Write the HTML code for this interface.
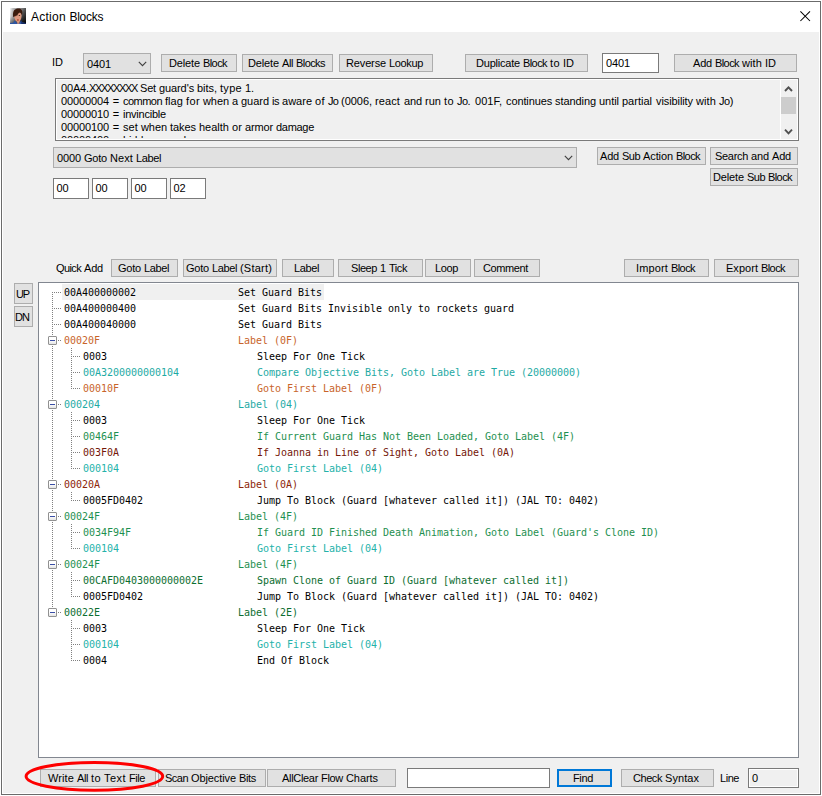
<!DOCTYPE html>
<html lang="en"><head><meta charset="utf-8"><title>Action Blocks</title>
<style>
html,body{margin:0;padding:0;background:#fff;}
body{width:822px;height:796px;overflow:hidden;position:relative;font-family:'Liberation Sans',sans-serif;font-size:11px;color:#000;}
.abs{position:absolute;}
#win{position:absolute;left:1px;top:1px;width:818px;height:792px;border:1px solid #6b6b6b;background:#fff;}
#client{position:absolute;left:3px;top:32px;width:816px;height:761px;background:#f0f0f0;}
#ttext{position:absolute;left:31px;top:10px;font-size:12px;line-height:14px;white-space:pre;}
.w{position:absolute;white-space:pre;line-height:13px;height:13px;}
.btn{position:absolute;box-sizing:border-box;border:1px solid #adadad;background:#e1e1e1;}
.edit{position:absolute;box-sizing:border-box;border:1px solid #7a7a7a;background:#fff;}
.combo{position:absolute;box-sizing:border-box;border:1px solid #adadad;background:#e1e1e1;}
.lbl{position:absolute;}
#memo{position:absolute;left:55px;top:78px;width:744px;height:63px;box-sizing:border-box;border:1px solid #7a7a7a;background:#f0f0f0;overflow:hidden;}
#memo .in{position:absolute;left:0;top:0;right:0;bottom:0;border:1px solid #fff;}
#tree{position:absolute;left:38px;top:282px;width:761px;height:476px;box-sizing:border-box;border:1px solid #828790;background:#fff;overflow:hidden;}
.tr{position:absolute;font-family:'DejaVu Sans Mono','Liberation Mono',monospace;font-size:10px;letter-spacing:-0.02px;line-height:16px;height:16px;white-space:pre;}
.hd{position:absolute;height:1px;background-image:linear-gradient(to right,#808080 50%,transparent 50%);background-size:2px 1px;}
.vd{position:absolute;width:1px;background-image:linear-gradient(to bottom,#808080 50%,transparent 50%);background-size:1px 2px;}
.box{position:absolute;width:9px;height:9px;box-sizing:border-box;border:1px solid #919191;background:linear-gradient(to bottom,#fff 45%,#e4e4e4 100%);border-radius:1px;}
.box i{position:absolute;left:1px;top:3px;width:5px;height:1px;background:#3a4ea6;}
</style></head>
<body>
<div id="win"></div>
<div id="client"></div>
<svg class="abs" style="left:10px;top:8px" width="16" height="16" viewBox="0 0 16 16">
<defs>
<linearGradient id="ig" x1="0" y1="0" x2="1" y2="0.15"><stop offset="0" stop-color="#f8f8f8"/><stop offset="0.2" stop-color="#b8b8b8"/><stop offset="0.7" stop-color="#808080"/><stop offset="1" stop-color="#5a5a5a"/></linearGradient>
<linearGradient id="ih" x1="0.2" y1="0" x2="0.9" y2="1"><stop offset="0.3" stop-color="#000" stop-opacity="0"/><stop offset="1" stop-color="#000" stop-opacity="0.95"/></linearGradient>
<filter id="bl" x="-10%" y="-10%" width="120%" height="120%"><feGaussianBlur stdDeviation="0.3"/></filter>
<clipPath id="ic"><rect width="16" height="16"/></clipPath>
</defs>
<g clip-path="url(#ic)">
<rect width="16" height="16" fill="url(#ig)"/>
<rect width="16" height="16" fill="url(#ih)"/>
<g filter="url(#bl)">
<path d="M-1 17 V15 L3.2 14.7 L4.5 12.5 L7 14.8 L9.6 14.8 L11 12.6 L12.6 14.6 L17 15.2 V17 Z" fill="#2e55a2"/>
<path d="M11 12.6 L12.6 14.6 L17 15.2 V17 H11.5 Z" fill="#162c62"/>
<path d="M7 11.5 L7.2 15.8 L9.4 15.8 L9.7 11.5 Z" fill="#d08e76"/>
<path d="M4 6 C3.8 9 4.8 12 6.6 13.6 C7.6 14.6 8.8 14.6 9.6 13.4 C11 11.6 11.8 9 11.6 6 C10 4 6 4 4 6 Z" fill="#dc987e"/>
<path d="M3.3 9.2 C2.4 5.2 3.4 1.8 6 0.9 C8 0.1 10.6 0.4 11.6 2 C12.6 3.6 12.5 5.6 11.8 7.2 C11.5 5.6 10.6 4.8 9.6 4.5 C8.6 5 7.7 6.2 7.1 7.7 C6.4 7.3 5.6 7.6 5 8.3 C4.3 8.8 3.7 9.1 3.3 9.2 Z" fill="#3a1a0e"/>
<ellipse cx="5.7" cy="7.8" rx="0.9" ry="0.45" fill="#40241a"/>
<ellipse cx="9.4" cy="7.6" rx="0.8" ry="0.5" fill="#40241a"/>
<ellipse cx="7.9" cy="12" rx="1.05" ry="0.7" fill="#b23e2a"/>
</g></g>
</svg>
<div id="ttext"><span style="letter-spacing:0.25px">Action</span> <span style="letter-spacing:-0.28px;margin-left:0.3px">Blocks</span></div>
<svg class="abs" style="left:800px;top:11px" width="11" height="11" viewBox="0 0 11 11"><path d="M0.4 0.4 L10 10 M10 0.4 L0.4 10" stroke="#000" stroke-width="1.05" fill="none"/></svg>
<span class="w" style="left:52px;top:56px">ID</span><div class="combo" style="left:83px;top:53px;width:68px;height:21px"><span class="w" style="left:3px;top:4px;letter-spacing:-0.12px">0401</span></div>
<svg class="abs" style="left:137.5px;top:61px" width="9" height="6" viewBox="0 0 9 6"><path d="M0.8 0.8 L4.5 4.7 L8.2 0.8" stroke="#404040" stroke-width="1.1" fill="none"/></svg>
<div class="edit" style="left:602px;top:53px;width:57px;height:20px"><span class="w" style="left:3px;top:3px;letter-spacing:-0.12px">0401</span></div>
<div id="memo">
<span class="w" style="left:5px;top:3px;letter-spacing:-0.15px">00A4.</span><span class="w" style="left:33px;top:3px;letter-spacing:-1.34px">XXXXXXXX</span> <span class="w" style="left:84px;top:3px;letter-spacing:-0.17px">Set</span> <span class="w" style="left:103px;top:3px;letter-spacing:-0.10px">guard's</span> <span class="w" style="left:141px;top:3px;letter-spacing:-0.04px">bits,</span> <span class="w" style="left:164px;top:3px;letter-spacing:0.30px">type</span> <span class="w" style="left:189px;top:3px;letter-spacing:-0.09px">1.</span>
<span class="w" style="left:5px;top:16px;letter-spacing:-0.12px">00000004</span> <span class="w" style="left:56.78px;top:16px">=</span> <span class="w" style="left:67px;top:16px;letter-spacing:-0.53px">common</span> <span class="w" style="left:109px;top:16px;letter-spacing:0.06px">flag</span> <span class="w" style="left:130px;top:16px;letter-spacing:0.39px">for</span> <span class="w" style="left:147px;top:16px;letter-spacing:-0.07px">when</span> <span class="w" style="left:175.94px;top:16px">a</span> <span class="w" style="left:185px;top:16px;letter-spacing:-0.03px">guard</span> <span class="w" style="left:216px;top:16px;letter-spacing:-0.48px">is</span> <span class="w" style="left:226px;top:16px;letter-spacing:0.01px">aware</span> <span class="w" style="left:259px;top:16px;letter-spacing:0.41px">of</span> <span class="w" style="left:272px;top:16px;letter-spacing:-0.81px">Jo</span> <span class="w" style="left:285px;top:16px;letter-spacing:-0.03px">(0006,</span> <span class="w" style="left:319px;top:16px;letter-spacing:0.11px">react</span> <span class="w" style="left:348px;top:16px;letter-spacing:-0.12px">and</span> <span class="w" style="left:369px;top:16px;letter-spacing:0.03px">run</span> <span class="w" style="left:388px;top:16px;letter-spacing:0.41px">to</span> <span class="w" style="left:401px;top:16px;letter-spacing:-0.56px">Jo.</span> <span class="w" style="left:419px;top:16px;letter-spacing:0.02px">001F,</span> <span class="w" style="left:450px;top:16px;letter-spacing:-0.12px">continues</span> <span class="w" style="left:499px;top:16px;letter-spacing:-0.07px">standing</span> <span class="w" style="left:543px;top:16px;letter-spacing:-0.04px">until</span> <span class="w" style="left:566px;top:16px">partial</span> <span class="w" style="left:600px;top:16px;letter-spacing:-0.09px">visibility</span> <span class="w" style="left:640px;top:16px;letter-spacing:0.11px">with</span> <span class="w" style="left:663px;top:16px;letter-spacing:-0.43px">Jo)</span>
<span class="w" style="left:5px;top:29px;letter-spacing:-0.12px">00000010</span> <span class="w" style="left:56.78px;top:29px">=</span> <span class="w" style="left:67px;top:29px;letter-spacing:-0.23px">invincible</span>
<span class="w" style="left:5px;top:42px;letter-spacing:-0.12px">00000100</span> <span class="w" style="left:56.78px;top:42px">=</span> <span class="w" style="left:67px;top:42px;letter-spacing:0.10px">set</span> <span class="w" style="left:85px;top:42px;letter-spacing:-0.07px">when</span> <span class="w" style="left:114px;top:42px;letter-spacing:-0.06px">takes</span> <span class="w" style="left:143px;top:42px">health</span> <span class="w" style="left:176px;top:42px;letter-spacing:0.11px">or</span> <span class="w" style="left:189px;top:42px;letter-spacing:-0.15px">armor</span> <span class="w" style="left:220px;top:42px;letter-spacing:-0.29px">damage</span>
<span class="w" style="left:5px;top:55px;letter-spacing:-0.12px">00000400</span> <span class="w" style="left:56.78px;top:55px">=</span> <span class="w" style="left:67px;top:55px;letter-spacing:-0.17px">hidden</span> <span class="w" style="left:102px;top:55px;letter-spacing:-0.03px">guard</span>
<div class="abs" style="left:1px;top:59px;width:723px;height:1px;background:#f0f0f0"></div><div class="abs" style="left:724px;top:1px;width:1px;height:60px;background:#fff"></div><div class="abs" style="left:725px;top:1px;width:16px;height:60px;background:#f0f0f0"></div>
<div class="abs" style="left:725px;top:18px;width:15px;height:17px;background:#cdcdcd"></div>
<svg class="abs" style="left:728px;top:6px" width="9" height="8" viewBox="0 0 9 8"><path d="M1 6 L4.5 2.3 L8 6" stroke="#505050" stroke-width="1.9" fill="none"/></svg>
<svg class="abs" style="left:728px;top:48.5px" width="9" height="8" viewBox="0 0 9 8"><path d="M1 1.6 L4.5 5.3 L8 1.6" stroke="#505050" stroke-width="1.9" fill="none"/></svg>
<div class="in"></div></div>
<div class="combo" style="left:53px;top:147px;width:524px;height:21px"><span class="w" style="left:3px;top:4px;letter-spacing:-0.12px">0000</span> <span class="w" style="left:30px;top:4px;letter-spacing:-0.21px">Goto</span> <span class="w" style="left:56px;top:4px;letter-spacing:0.09px">Next</span> <span class="w" style="left:82px;top:4px;letter-spacing:-0.38px">Label</span></div>
<svg class="abs" style="left:563.5px;top:155px" width="9" height="6" viewBox="0 0 9 6"><path d="M0.8 0.8 L4.5 4.7 L8.2 0.8" stroke="#404040" stroke-width="1.1" fill="none"/></svg>
<div class="edit" style="left:53px;top:178px;width:36px;height:21px"><span class="w" style="left:2.5px;top:3px;letter-spacing:-0.12px">00</span></div>
<div class="edit" style="left:92px;top:178px;width:36px;height:21px"><span class="w" style="left:2.5px;top:3px;letter-spacing:-0.12px">00</span></div>
<div class="edit" style="left:131px;top:178px;width:36px;height:21px"><span class="w" style="left:2.5px;top:3px;letter-spacing:-0.12px">00</span></div>
<div class="edit" style="left:170px;top:178px;width:36px;height:21px"><span class="w" style="left:2.5px;top:3px;letter-spacing:-0.12px">02</span></div>
<div class="btn" style="left:161px;top:54px;width:76px;height:18px"><span class="w" style="left:7px;top:2px;letter-spacing:-0.13px">Delete</span> <span class="w" style="left:41px;top:2px;letter-spacing:-0.58px">Block</span></div>
<div class="btn" style="left:242px;top:54px;width:91px;height:18px"><span class="w" style="left:5px;top:2px;letter-spacing:-0.13px">Delete</span> <span class="w" style="left:39px;top:2px;letter-spacing:-0.41px">All</span> <span class="w" style="left:53px;top:2px;letter-spacing:-0.57px">Blocks</span></div>
<div class="btn" style="left:339px;top:54px;width:94px;height:18px"><span class="w" style="left:6px;top:2px;letter-spacing:-0.14px">Reverse</span> <span class="w" style="left:49px;top:2px;letter-spacing:-0.35px">Lookup</span></div>
<div class="btn" style="left:465px;top:54px;width:123px;height:18px"><span class="w" style="left:10px;top:2px;letter-spacing:-0.21px">Duplicate</span> <span class="w" style="left:57px;top:2px;letter-spacing:-0.58px">Block</span> <span class="w" style="left:84px;top:2px;letter-spacing:0.41px">to</span> <span class="w" style="left:97px;top:2px">ID</span></div>
<div class="btn" style="left:674px;top:54px;width:123px;height:18px"><span class="w" style="left:18px;top:2px;letter-spacing:-0.19px">Add</span> <span class="w" style="left:40px;top:2px;letter-spacing:-0.58px">Block</span> <span class="w" style="left:67px;top:2px;letter-spacing:0.11px">with</span> <span class="w" style="left:90px;top:2px">ID</span></div>
<div class="btn" style="left:597px;top:147px;width:109px;height:18px"><span class="w" style="left:2px;top:2px;letter-spacing:-0.19px">Add</span> <span class="w" style="left:24px;top:2px;letter-spacing:-0.53px">Sub</span> <span class="w" style="left:45px;top:2px;letter-spacing:-0.10px">Action</span> <span class="w" style="left:78px;top:2px;letter-spacing:-0.58px">Block</span></div>
<div class="btn" style="left:710px;top:147px;width:88px;height:18px"><span class="w" style="left:4px;top:2px;letter-spacing:-0.31px">Search</span> <span class="w" style="left:40px;top:2px;letter-spacing:-0.12px">and</span> <span class="w" style="left:61px;top:2px;letter-spacing:-0.19px">Add</span></div>
<div class="btn" style="left:710px;top:168px;width:88px;height:18px"><span class="w" style="left:2px;top:2px;letter-spacing:-0.13px">Delete</span> <span class="w" style="left:36px;top:2px;letter-spacing:-0.53px">Sub</span> <span class="w" style="left:57px;top:2px;letter-spacing:-0.58px">Block</span></div>
<div class="btn" style="left:111px;top:259px;width:67px;height:18px"><span class="w" style="left:6px;top:2px;letter-spacing:-0.21px">Goto</span> <span class="w" style="left:32px;top:2px;letter-spacing:-0.38px">Label</span></div>
<div class="btn" style="left:183px;top:259px;width:94px;height:18px"><span class="w" style="left:2px;top:2px;letter-spacing:-0.21px">Goto</span> <span class="w" style="left:28px;top:2px;letter-spacing:-0.38px">Label</span> <span class="w" style="left:56px;top:2px;letter-spacing:0.21px">(Start)</span></div>
<div class="btn" style="left:282px;top:259px;width:52px;height:18px"><span class="w" style="left:11px;top:2px;letter-spacing:-0.38px">Label</span></div>
<div class="btn" style="left:338px;top:259px;width:85px;height:18px"><span class="w" style="left:12px;top:2px;letter-spacing:-0.43px">Sleep</span> <span class="w" style="left:40.94px;top:2px">1</span> <span class="w" style="left:50px;top:2px;letter-spacing:-0.44px">Tick</span></div>
<div class="btn" style="left:425px;top:259px;width:46px;height:18px"><span class="w" style="left:9px;top:2px;letter-spacing:-0.37px">Loop</span></div>
<div class="btn" style="left:474px;top:259px;width:66px;height:18px"><span class="w" style="left:8px;top:2px;letter-spacing:-0.38px">Comment</span></div>
<div class="btn" style="left:624px;top:259px;width:85px;height:18px"><span class="w" style="left:11px;top:2px;letter-spacing:0.14px">Import</span> <span class="w" style="left:46px;top:2px;letter-spacing:-0.58px">Block</span></div>
<div class="btn" style="left:714px;top:259px;width:85px;height:18px"><span class="w" style="left:11px;top:2px;letter-spacing:0.03px">Export</span> <span class="w" style="left:46px;top:2px;letter-spacing:-0.58px">Block</span></div>
<div class="btn" style="left:14px;top:283px;width:19px;height:21px"><span class="w" style="left:1px;top:4px;letter-spacing:-1.14px">UP</span></div>
<div class="btn" style="left:14px;top:306px;width:19px;height:21px"><span class="w" style="left:0px;top:4px;letter-spacing:-0.95px">DN</span></div>
<div class="btn" style="left:40px;top:769px;width:116px;height:18px"><span class="w" style="left:7px;top:2px;letter-spacing:0.11px">Write</span> <span class="w" style="left:36px;top:2px;letter-spacing:-0.41px">All</span> <span class="w" style="left:50px;top:2px;letter-spacing:0.41px">to</span> <span class="w" style="left:63px;top:2px;letter-spacing:0.45px">Text</span> <span class="w" style="left:88px;top:2px;letter-spacing:-0.43px">File</span></div>
<div class="btn" style="left:158px;top:769px;width:108px;height:18px"><span class="w" style="left:6px;top:2px;letter-spacing:-0.52px">Scan</span> <span class="w" style="left:32px;top:2px;letter-spacing:-0.10px">Objective</span> <span class="w" style="left:80px;top:2px;letter-spacing:-0.34px">Bits</span></div>
<div class="btn" style="left:267px;top:769px;width:129px;height:18px"><span class="w" style="left:14px;top:2px;letter-spacing:-0.31px">AllClear</span> <span class="w" style="left:53px;top:2px;letter-spacing:-0.31px">Flow</span> <span class="w" style="left:78px;top:2px;letter-spacing:-0.07px">Charts</span></div>
<div class="btn" style="left:621px;top:769px;width:93px;height:18px"><span class="w" style="left:11px;top:2px;letter-spacing:-0.44px">Check</span> <span class="w" style="left:43px;top:2px;letter-spacing:0.06px">Syntax</span></div>
<div class="btn" style="left:557px;top:769px;width:55px;height:18px;border:2px solid #0078d7"><span class="w" style="left:14px;top:1px;letter-spacing:-0.35px">Find</span></div>
<span class="w" style="left:56px;top:262px;letter-spacing:-0.62px">Quick</span> <span class="w" style="left:84px;top:262px;letter-spacing:-0.19px">Add</span>
<div class="edit" style="left:407px;top:768px;width:143px;height:20px"></div>
<span class="w" style="left:720px;top:772px;letter-spacing:-0.45px">Line</span><div class="edit" style="left:748px;top:768px;width:51px;height:20px;background:#f0f0f0;box-shadow:inset 0 0 0 1px #fff"><span class="w" style="left:2.94px;top:3px">0</span></div>
<div id="tree">
<div class="abs" style="left:23px;top:1px;width:262px;height:16px;background:#f0f0f0"></div>
<div class="vd" style="left:13px;top:9px;height:320px"></div>
<div class="hd" style="left:15px;top:9px;width:7px"></div><div class="tr" style="left:25px;top:2px">00A400000002</div><div class="tr" style="left:199px;top:2px">Set Guard Bits</div>
<div class="hd" style="left:15px;top:25px;width:7px"></div><div class="tr" style="left:25px;top:18px">00A400000400</div><div class="tr" style="left:199px;top:18px">Set Guard Bits Invisible only to rockets guard</div>
<div class="hd" style="left:15px;top:41px;width:7px"></div><div class="tr" style="left:25px;top:34px">00A400040000</div><div class="tr" style="left:199px;top:34px">Set Guard Bits</div>
<div class="hd" style="left:19px;top:57px;width:3px"></div><div class="vd" style="left:32px;top:65px;height:41px"></div><div class="box" style="left:9px;top:53px"><i></i></div><div class="tr" style="left:25px;top:50px;color:#c8642a">00020F</div><div class="tr" style="left:199px;top:50px;color:#c8642a">Label (0F)</div>
<div class="hd" style="left:34px;top:73px;width:7px"></div><div class="tr" style="left:44px;top:66px">0003</div><div class="tr" style="left:218px;top:66px">Sleep For One Tick</div>
<div class="hd" style="left:34px;top:89px;width:7px"></div><div class="tr" style="left:44px;top:82px;color:#1eaaa4">00A3200000000104</div><div class="tr" style="left:218px;top:82px;color:#1eaaa4">Compare Objective Bits, Goto Label are True (20000000)</div>
<div class="hd" style="left:34px;top:105px;width:7px"></div><div class="tr" style="left:44px;top:98px;color:#c8642a">00010F</div><div class="tr" style="left:218px;top:98px;color:#c8642a">Goto First Label (0F)</div>
<div class="hd" style="left:19px;top:121px;width:3px"></div><div class="vd" style="left:32px;top:129px;height:57px"></div><div class="box" style="left:9px;top:117px"><i></i></div><div class="tr" style="left:25px;top:114px;color:#1eaaa4">000204</div><div class="tr" style="left:199px;top:114px;color:#1eaaa4">Label (04)</div>
<div class="hd" style="left:34px;top:137px;width:7px"></div><div class="tr" style="left:44px;top:130px">0003</div><div class="tr" style="left:218px;top:130px">Sleep For One Tick</div>
<div class="hd" style="left:34px;top:153px;width:7px"></div><div class="tr" style="left:44px;top:146px;color:#1e9050">00464F</div><div class="tr" style="left:218px;top:146px;color:#1e9050">If Current Guard Has Not Been Loaded, Goto Label (4F)</div>
<div class="hd" style="left:34px;top:169px;width:7px"></div><div class="tr" style="left:44px;top:162px;color:#741608">003F0A</div><div class="tr" style="left:218px;top:162px;color:#741608">If Joanna in Line of Sight, Goto Label (0A)</div>
<div class="hd" style="left:34px;top:185px;width:7px"></div><div class="tr" style="left:44px;top:178px;color:#24b2aa">000104</div><div class="tr" style="left:218px;top:178px;color:#24b2aa">Goto First Label (04)</div>
<div class="hd" style="left:19px;top:201px;width:3px"></div><div class="vd" style="left:32px;top:209px;height:9px"></div><div class="box" style="left:9px;top:197px"><i></i></div><div class="tr" style="left:25px;top:194px;color:#8c2608">00020A</div><div class="tr" style="left:199px;top:194px;color:#8c2608">Label (0A)</div>
<div class="hd" style="left:34px;top:217px;width:7px"></div><div class="tr" style="left:44px;top:210px">0005FD0402</div><div class="tr" style="left:218px;top:210px">Jump To Block (Guard [whatever called it]) (JAL TO: 0402)</div>
<div class="hd" style="left:19px;top:233px;width:3px"></div><div class="vd" style="left:32px;top:241px;height:25px"></div><div class="box" style="left:9px;top:229px"><i></i></div><div class="tr" style="left:25px;top:226px;color:#1e9050">00024F</div><div class="tr" style="left:199px;top:226px;color:#1e9050">Label (4F)</div>
<div class="hd" style="left:34px;top:249px;width:7px"></div><div class="tr" style="left:44px;top:242px;color:#1e9050">0034F94F</div><div class="tr" style="left:218px;top:242px;color:#1e9050">If Guard ID Finished Death Animation, Goto Label (Guard's Clone ID)</div>
<div class="hd" style="left:34px;top:265px;width:7px"></div><div class="tr" style="left:44px;top:258px;color:#24b2aa">000104</div><div class="tr" style="left:218px;top:258px;color:#24b2aa">Goto First Label (04)</div>
<div class="hd" style="left:19px;top:281px;width:3px"></div><div class="vd" style="left:32px;top:289px;height:25px"></div><div class="box" style="left:9px;top:277px"><i></i></div><div class="tr" style="left:25px;top:274px;color:#1e9050">00024F</div><div class="tr" style="left:199px;top:274px;color:#1e9050">Label (4F)</div>
<div class="hd" style="left:34px;top:297px;width:7px"></div><div class="tr" style="left:44px;top:290px;color:#0c6e30">00CAFD0403000000002E</div><div class="tr" style="left:218px;top:290px;color:#0c6e30">Spawn Clone of Guard ID (Guard [whatever called it])</div>
<div class="hd" style="left:34px;top:313px;width:7px"></div><div class="tr" style="left:44px;top:306px">0005FD0402</div><div class="tr" style="left:218px;top:306px">Jump To Block (Guard [whatever called it]) (JAL TO: 0402)</div>
<div class="hd" style="left:19px;top:329px;width:3px"></div><div class="vd" style="left:32px;top:337px;height:41px"></div><div class="box" style="left:9px;top:325px"><i></i></div><div class="tr" style="left:25px;top:322px;color:#0c6e30">00022E</div><div class="tr" style="left:199px;top:322px;color:#0c6e30">Label (2E)</div>
<div class="hd" style="left:34px;top:345px;width:7px"></div><div class="tr" style="left:44px;top:338px">0003</div><div class="tr" style="left:218px;top:338px">Sleep For One Tick</div>
<div class="hd" style="left:34px;top:361px;width:7px"></div><div class="tr" style="left:44px;top:354px;color:#24b2aa">000104</div><div class="tr" style="left:218px;top:354px;color:#24b2aa">Goto First Label (04)</div>
<div class="hd" style="left:34px;top:377px;width:7px"></div><div class="tr" style="left:44px;top:370px">0004</div><div class="tr" style="left:218px;top:370px">End Of Block</div>
</div>
<svg class="abs" style="left:20px;top:758px" width="150" height="38" viewBox="0 0 150 38"><ellipse cx="74.4" cy="18.35" rx="68.3" ry="13.95" fill="none" stroke="#fe0000" stroke-width="3"/></svg>
</body></html>
